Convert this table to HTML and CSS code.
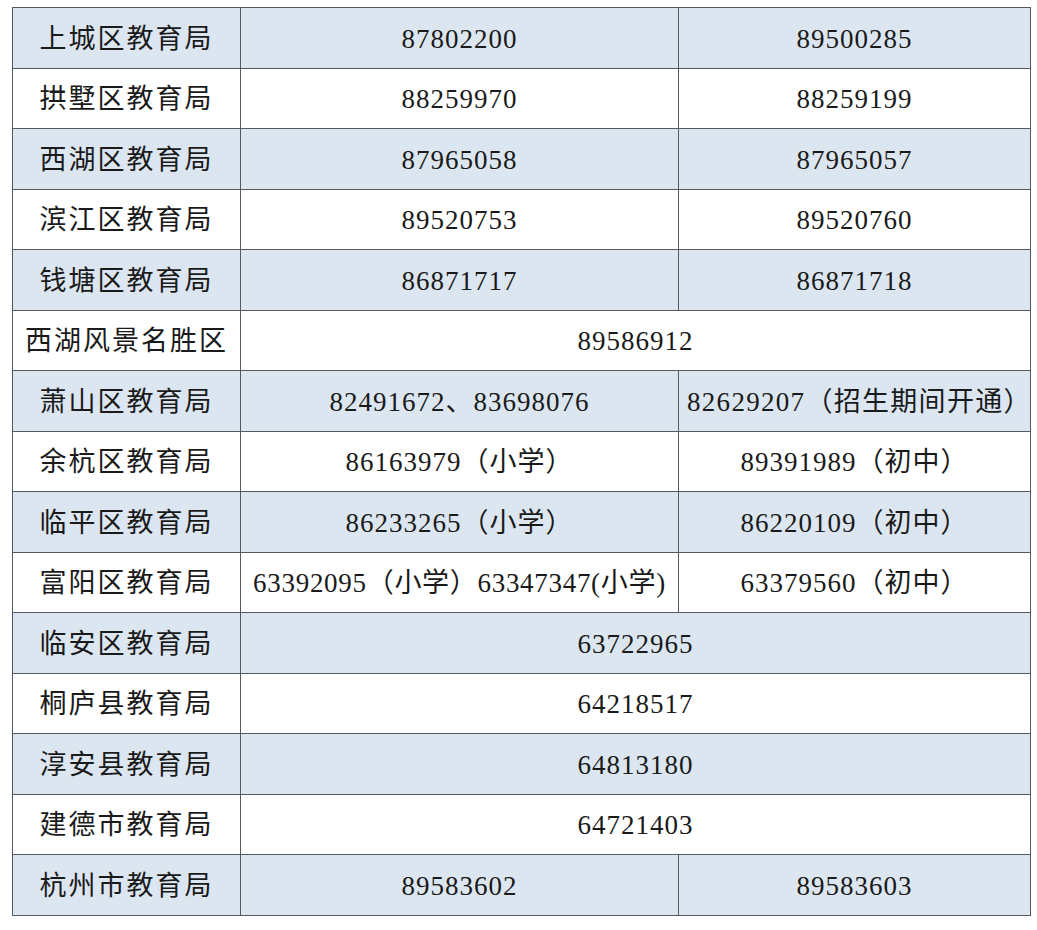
FILE: index.html
```html
<!DOCTYPE html>
<html lang="zh">
<head>
<meta charset="utf-8">
<link rel="stylesheet" href="styles.css">
</head>
<body>
<table class="tbl">
<colgroup><col class="c1"><col class="c2"><col class="c3"></colgroup>
<tr class="blue"><td class="name">上城区教育局</td><td>87802200</td><td>89500285</td></tr>
<tr><td class="name">拱墅区教育局</td><td>88259970</td><td>88259199</td></tr>
<tr class="blue"><td class="name">西湖区教育局</td><td>87965058</td><td>87965057</td></tr>
<tr><td class="name">滨江区教育局</td><td>89520753</td><td>89520760</td></tr>
<tr class="blue"><td class="name">钱塘区教育局</td><td>86871717</td><td>86871718</td></tr>
<tr><td class="name">西湖风景名胜区</td><td colspan="2">89586912</td></tr>
<tr class="blue"><td class="name">萧山区教育局</td><td>82491672、83698076</td><td class="wide">82629207（招生期间开通）</td></tr>
<tr><td class="name">余杭区教育局</td><td>86163979（小学）</td><td>89391989（初中）</td></tr>
<tr class="blue"><td class="name">临平区教育局</td><td>86233265（小学）</td><td>86220109（初中）</td></tr>
<tr><td class="name">富阳区教育局</td><td class="tight">63392095（小学）63347347(小学)</td><td>63379560（初中）</td></tr>
<tr class="blue"><td class="name">临安区教育局</td><td colspan="2">63722965</td></tr>
<tr><td class="name">桐庐县教育局</td><td colspan="2">64218517</td></tr>
<tr class="blue"><td class="name">淳安县教育局</td><td colspan="2">64813180</td></tr>
<tr><td class="name">建德市教育局</td><td colspan="2">64721403</td></tr>
<tr class="blue"><td class="name">杭州市教育局</td><td>89583602</td><td>89583603</td></tr>
</table>
</body>
</html>
```
FILE: styles.css
```css
html, body {
  margin: 0;
  padding: 0;
  background: #ffffff;
}
body {
  padding: 7px 0 0 12px;
}
.tbl {
  border-collapse: collapse;
  table-layout: fixed;
  width: 1018px;
  font-family: "Liberation Serif", "Noto Sans CJK SC", serif;
  font-size: 27px;
  color: #1a1a1a;
  letter-spacing: 1px;
}
.c1 { width: 228px; }
.c2 { width: 438px; }
.c3 { width: 352px; }
.tbl td {
  border: 1px solid #555a60;
  height: 56.5px;
  padding: 3px 0 0 0;
  text-align: center;
  vertical-align: middle;
  white-space: nowrap;
  line-height: 1;
}
.tbl td.name {
  letter-spacing: 2px;
}
.tbl td.tight {
  letter-spacing: 0.7px;
}
.tbl td.wide {
  letter-spacing: 1.3px;
  padding-left: 8px;
}
.blue td {
  background: #dce6f1;
}
```
